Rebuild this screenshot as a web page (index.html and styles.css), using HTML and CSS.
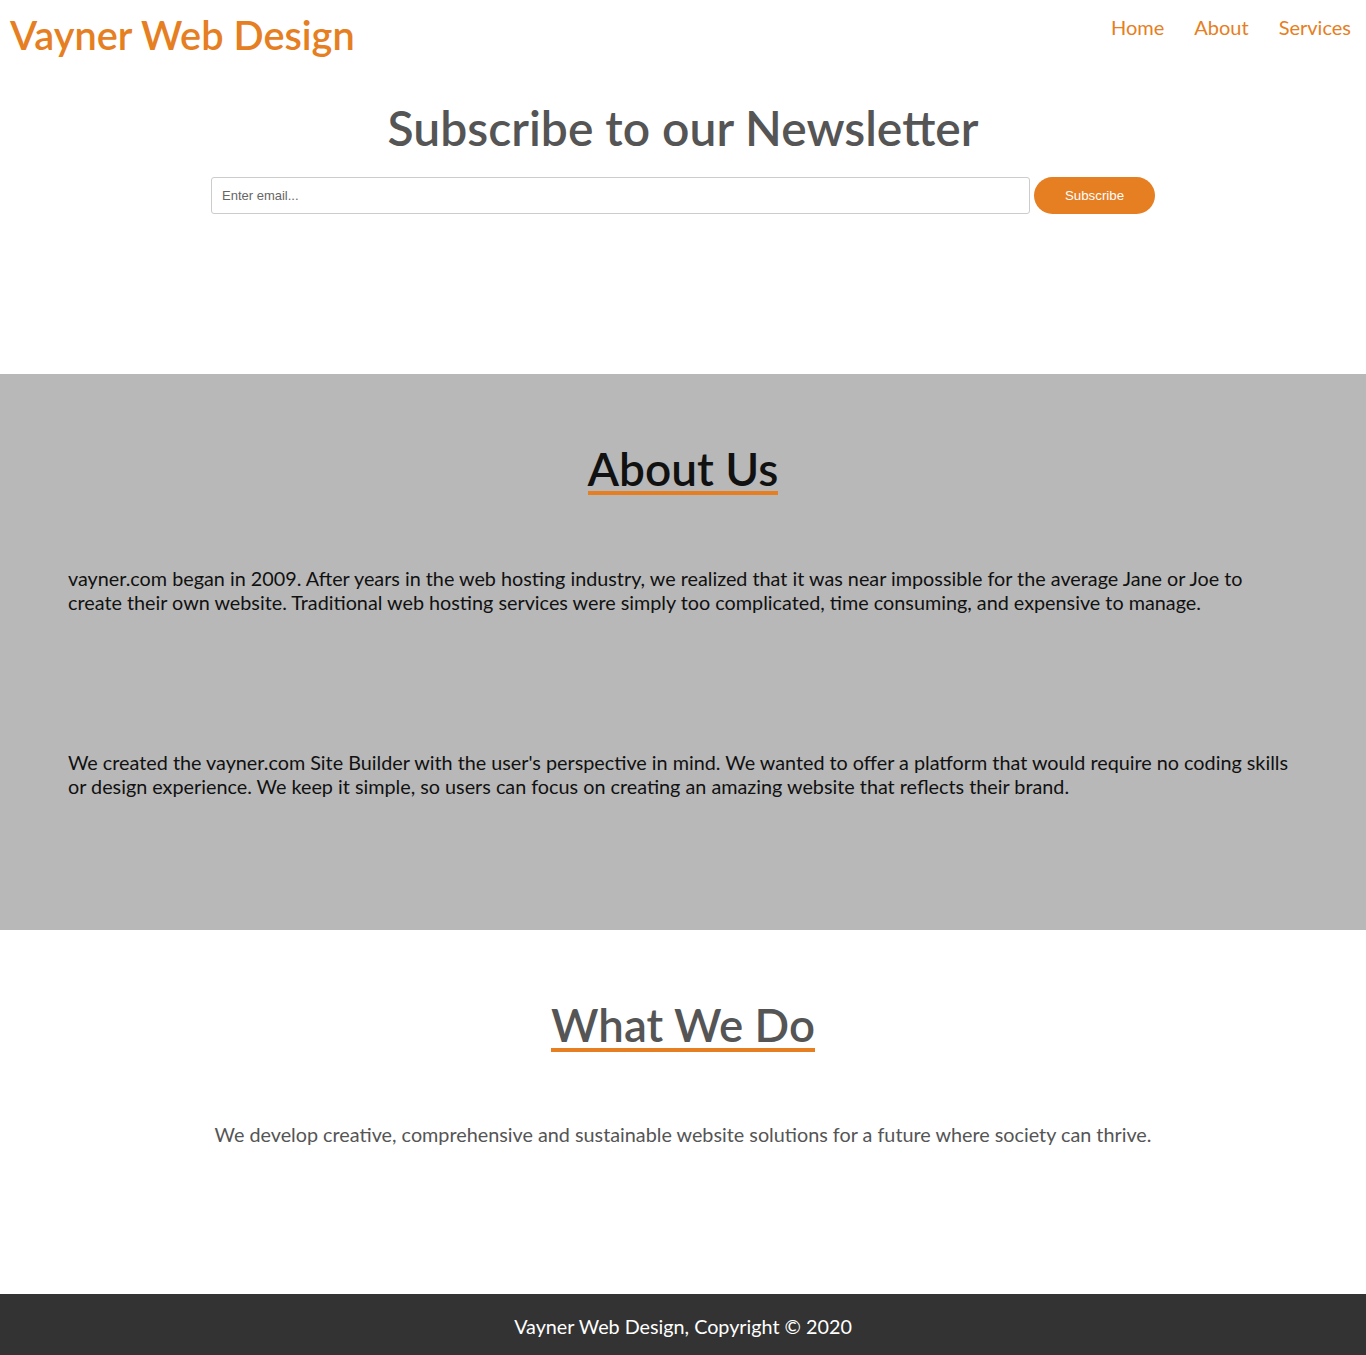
FILE: index.html
```html
<!DOCTYPE html>
<html lang="en">
<head>
<meta charset="utf-8">
<title>Vayner Web Design</title>
<link rel="stylesheet" href="styles.css">
</head>
<body>
<header class="site-header">
  <div class="logo">Vayner Web Design</div>
  <nav class="nav">
    <a href="#">Home</a>
    <a href="#">About</a>
    <a href="#">Services</a>
  </nav>
</header>

<section class="newsletter">
  <h1 class="newsletter-title">Subscribe to our Newsletter</h1>
  <form class="newsletter-form">
    <input class="email-input" type="email" placeholder="Enter email...">
    <button class="subscribe-btn" type="button">Subscribe</button>
  </form>
</section>

<section class="about">
  <h2 class="section-title about-title"><span>About Us</span></h2>
  <p class="about-text first">vayner.com began in 2009. After years in the web hosting industry, we realized that it was near impossible for the average Jane or Joe to create their own website. Traditional web hosting services were simply too complicated, time consuming, and expensive to manage.</p>
  <p class="about-text second">We created the vayner.com Site Builder with the user's perspective in mind. We wanted to offer a platform that would require no coding skills or design experience. We keep it simple, so users can focus on creating an amazing website that reflects their brand.</p>
</section>

<section class="whatwedo">
  <h2 class="section-title wwd-title"><span>What We Do</span></h2>
  <p class="wwd-text">We develop creative, comprehensive and sustainable website solutions for a future where society can thrive.</p>
</section>

<footer class="site-footer">
  <p>Vayner Web Design, Copyright &copy; 2020</p>
</footer>
</body>
</html>
```

FILE: styles.css
```css
* { box-sizing: border-box; }

body {
  margin: 0;
  font-family: Lato, "Open Sans", sans-serif;
  background: #fff;
}

.site-header {
  display: flex;
  justify-content: space-between;
  align-items: flex-start;
  padding: 0 15px 0 10px;
  height: 80px;
}

.logo {
  font-size: 39.7px;
  font-weight: 600;
  color: #e67e22;
  line-height: 1;
  margin-top: 15px;
}

.nav {
  display: flex;
  gap: 30px;
  margin-top: 15px;
}

.nav a {
  color: #e67e22;
  text-decoration: none;
  font-size: 20px;
}

.newsletter {
  height: 294px;
  text-align: center;
}

.newsletter-title {
  margin: 0;
  font-size: 48px;
  font-weight: 600;
  color: #555;
  line-height: 1;
  padding-top: 24px;
}

.newsletter-form {
  display: flex;
  justify-content: center;
  gap: 4px;
  margin-top: 25px;
}

.email-input {
  width: 819px;
  height: 37px;
  border: 1px solid #ccc;
  border-radius: 3px;
  padding: 0 10px;
  font-family: "Liberation Sans", Arial, sans-serif;
  font-size: 13px;
  color: #555;
}

.email-input::placeholder { color: #666; }

.subscribe-btn {
  width: 121px;
  height: 37px;
  border: none;
  border-radius: 20px;
  background: #e67e22;
  color: #fff;
  font-family: "Liberation Sans", Arial, sans-serif;
  font-size: 13.3px;
}

.about {
  background: #b8b8b8;
  height: 556px;
  padding: 72px 68px 0;
}

.section-title {
  margin: 0;
  text-align: center;
  font-size: 46px;
  font-weight: 600;
  line-height: 1;
}

.section-title span {
  display: inline-block;
  border-bottom: 4px solid #e67e22;
  line-height: 0.98;
}

.about-title { color: #111; }

.about-text {
  margin: 0;
  font-size: 19.8px;
  line-height: 24px;
  color: #111;
}

.about-text.first { margin-top: 71px; }
.about-text.second { margin-top: 136px; }

.whatwedo {
  height: 364px;
  padding-top: 72px;
  text-align: center;
}

.wwd-title { color: #555; font-size: 45.6px; }

.wwd-text {
  margin: 70px 0 0;
  font-size: 19.8px;
  line-height: 24px;
  color: #555;
}

.site-footer {
  background: #333;
  height: 61px;
  display: flex;
  align-items: center;
  justify-content: center;
  padding-top: 3px;
}

.site-footer p {
  margin: 0;
  color: #fff;
  font-size: 19.75px;
}
```
